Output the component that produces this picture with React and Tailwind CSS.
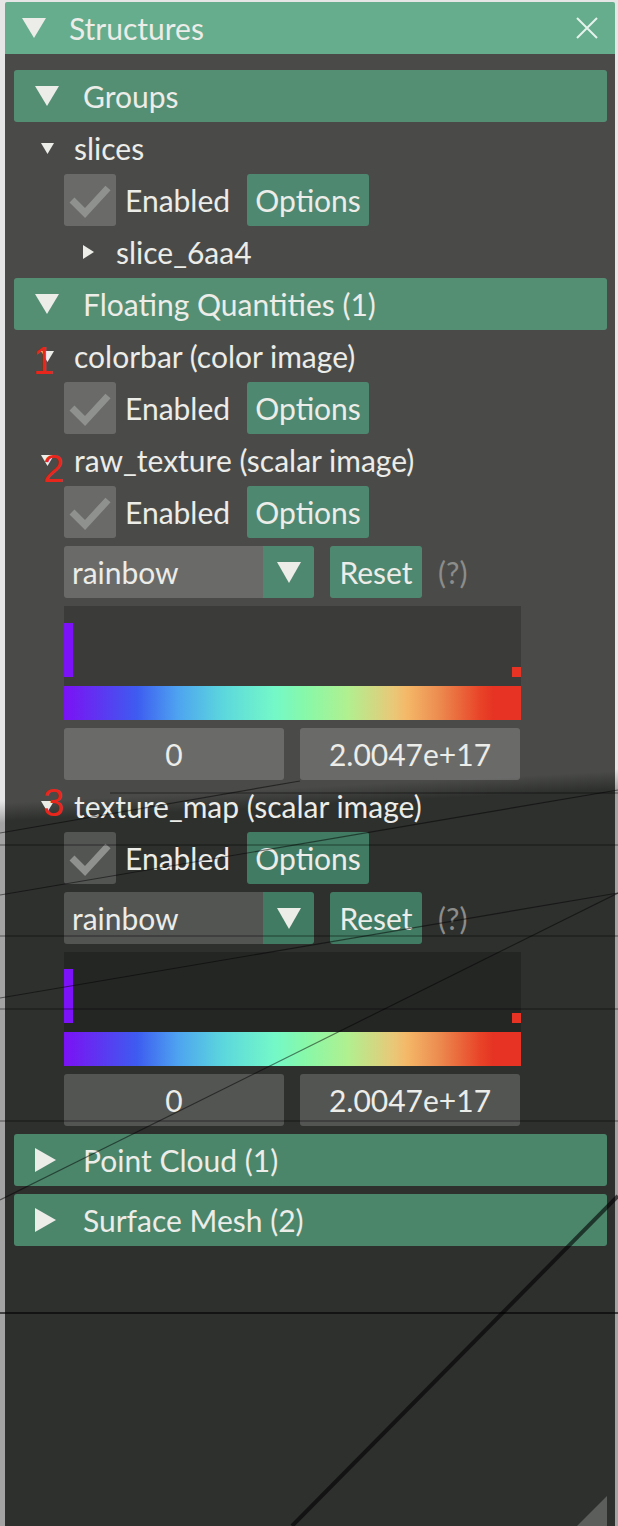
import React from "react";

const txt = "text-[#ecece8]";

function Tri({ dir = "down", w = 24, h = 20, className = "" }) {
  const pts = dir === "down" ? `0,0 ${w},0 ${w / 2},${h}` : `0,0 ${w},${h / 2} 0,${h}`;
  return (
    <svg width={w} height={h} viewBox={`0 0 ${w} ${h}`} className={className}>
      <polygon points={pts} fill="#ecece8" />
    </svg>
  );
}

function Header({ label, open }) {
  return (
    <div className="flex h-[52px] items-center rounded-[3px] bg-[#5aaf89]/[0.68]">
      <div className="flex w-[69px] justify-start pl-[21px]">
        {open ? <Tri dir="down" w={24} h={20} /> : <Tri dir="right" w={21} h={24} />}
      </div>
      <span className={txt}>{label}</span>
    </div>
  );
}

function Node({ label, open, tri, text, badge }) {
  return (
    <div className="relative flex h-[36px] items-center">
      <div style={{ width: text }} className="flex">
        <div style={{ marginLeft: tri }}>
          {open ? <Tri dir="down" w={13} h={11} /> : <Tri dir="right" w={11} h={14} />}
        </div>
      </div>
      <span className={txt}>{label}</span>
      {badge && (
        <span
          className="absolute text-[38px] leading-none text-[#e8261c] font-['Liberation_Sans',sans-serif]"
          style={{ left: badge.x, top: badge.y }}
        >
          {badge.n}
        </span>
      )}
    </div>
  );
}

function Check() {
  return (
    <div className="flex h-[52px] items-center pl-[50px]">
      <div className="flex h-[52px] w-[52px] items-center justify-center rounded-[3px] bg-white/[0.18]">
        <svg width="52" height="52" viewBox="0 0 52 52">
          <polyline points="8,26 21,39 44,14" fill="none" stroke="#8f918f" strokeWidth="7" />
        </svg>
      </div>
      <span className={`ml-[9px] ${txt}`}>Enabled</span>
      <button className={`ml-[17px] h-[52px] w-[122px] rounded-[3px] bg-[#54c597]/50 ${txt}`}>Options</button>
    </div>
  );
}

function ColorMap() {
  return (
    <>
      <div className="flex h-[52px] items-center pl-[50px]">
        <div className="flex h-[52px] w-[250px] overflow-hidden rounded-[3px]">
          <div className={`flex flex-1 items-center bg-white/[0.18] pl-[8px] ${txt}`}>rainbow</div>
          <div className="flex w-[51px] items-center justify-center bg-[#54c597]/50">
            <Tri dir="down" w={24} h={21} />
          </div>
        </div>
        <button className={`ml-[16px] h-[52px] w-[92px] rounded-[3px] bg-[#54c597]/50 ${txt}`}>Reset</button>
        <span className="ml-[16px] text-[#8c8d8a]">(?)</span>
      </div>
      <div className="ml-[50px] w-[457px]">
        <div className="flex h-[80px] items-end justify-between bg-black/20 pb-[9px]">
          <div className="h-[54px] w-[9px] bg-[#7b12f7]" />
          <div className="h-[10px] w-[9px] bg-[#e63323]" />
        </div>
        <div className="h-[34px] bg-[linear-gradient(to_right,#7a12f6_0%,#6c24f2_4%,#3d5cf0_16%,#4ea4f0_25%,#5cd8dc_35%,#74f8c8_46%,#88f8a8_53%,#b0f090_62%,#e8c878_72%,#f4b868_75%,#ec8c50_82%,#e84428_91%,#e63323_94%,#e63323_100%)]" />
      </div>
      <div className="flex h-[52px] gap-[16px] pl-[50px]">
        <div className={`flex w-[220px] items-center justify-center rounded-[3px] bg-white/[0.18] ${txt}`}>0</div>
        <div className={`flex w-[220px] items-center justify-center rounded-[3px] bg-white/[0.18] ${txt}`}>2.0047e+17</div>
      </div>
    </>
  );
}

export default function App() {
  return (
    <div className="relative h-[1526px] w-[618px] overflow-hidden bg-[linear-gradient(177deg,#e6e6e6_0px,#e6e6e6_800px,#a3a3a3_822px,#a3a3a3_100%)] font-['Lato',sans-serif] text-[30px] leading-[36px]">
      <div className="ml-[5px] flex h-[1526px] w-[610px] flex-col pt-[2px]">
        <div className="flex h-[52px] items-center rounded-t-[2px] bg-[#66ad8d]">
          <Tri dir="down" w={24} h={20} className="ml-[17px]" />
          <span className={`ml-[23px] flex-1 ${txt}`}>Structures</span>
          <svg width="24" height="24" viewBox="0 0 24 24" className="mr-[16px]">
            <path d="M2 2 L22 22 M22 2 L2 22" stroke="#e6f2ec" strokeWidth="2" />
          </svg>
        </div>
        <div className="flex flex-1 flex-col gap-[8px] bg-[linear-gradient(177deg,#4a4b49_0px,#4a4b49_748px,#2e302e_766px,#2e302e_100%)] pl-[9px] pr-[8px] pt-[16px]">
          <Header label="Groups" open />
          <Node label="slices" open tri={27} text={60} />
          <Check />
          <Node label="slice_6aa4" tri={69} text={102} />
          <Header label="Floating Quantities (1)" open />
          <Node label="colorbar (color image)" open tri={27} text={60} badge={{ n: "1", x: 19, y: 4 }} />
          <Check />
          <Node label="raw_texture (scalar image)" open tri={27} text={60} badge={{ n: "2", x: 29, y: 8 }} />
          <Check />
          <ColorMap />
          <Node label="texture_map (scalar image)" open tri={27} text={60} badge={{ n: "3", x: 29, y: -4 }} />
          <Check />
          <ColorMap />
          <Header label="Point Cloud (1)" />
          <Header label="Surface Mesh (2)" />
          <div className="flex flex-1 items-end justify-end">
            <svg width="30" height="30" viewBox="0 0 30 30">
              <polygon points="30,0 30,30 0,30" fill="#5c5e5c" />
            </svg>
          </div>
        </div>
      </div>
      <svg className="pointer-events-none absolute inset-0" width="618" height="1526" viewBox="0 0 618 1526">
        <g stroke="#000" strokeOpacity="0.5" strokeWidth="1.2" fill="none">
          <line x1="110" y1="793" x2="618" y2="793" />
          <line x1="0" y1="845" x2="618" y2="845" />
          <line x1="0" y1="936" x2="618" y2="936" />
          <line x1="0" y1="1009" x2="618" y2="1009" />
          <line x1="0" y1="1121" x2="618" y2="1121" />
          <line x1="0" y1="833" x2="300" y2="781" />
          <line x1="0" y1="895" x2="618" y2="790" />
          <line x1="0" y1="998" x2="618" y2="893" />
          <line x1="0" y1="1200" x2="618" y2="893" />
        </g>
        <line x1="0" y1="1313" x2="618" y2="1313" stroke="#000" strokeOpacity="0.6" strokeWidth="2" />
        <line x1="292" y1="1526" x2="618" y2="1196" stroke="#000" strokeOpacity="0.6" strokeWidth="4" />
      </svg>
    </div>
  );
}
